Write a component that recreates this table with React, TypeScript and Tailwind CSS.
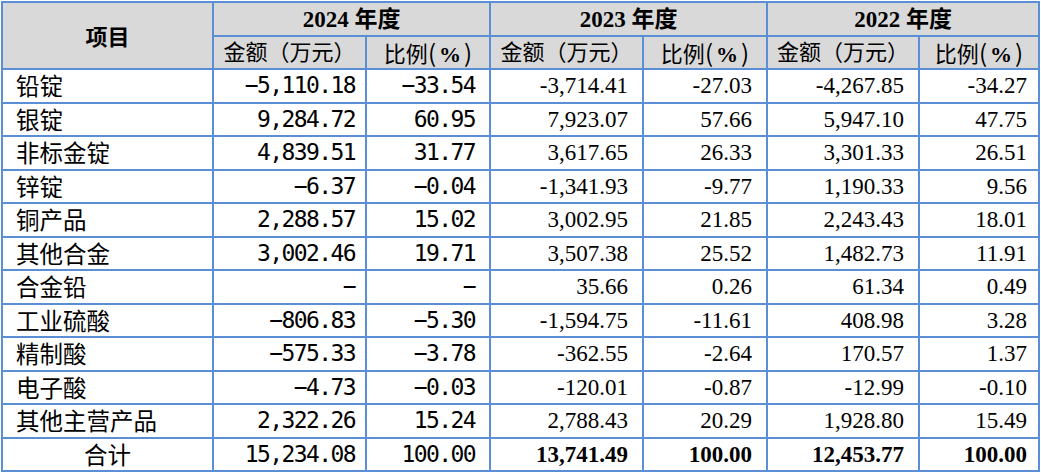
const rows: [string, string, string, string, string, string, string][] = [
  ['铅锭', '−5,110.18', '−33.54', '-3,714.41', '-27.03', '-4,267.85', '-34.27'],
  ['银锭', '9,284.72', '60.95', '7,923.07', '57.66', '5,947.10', '47.75'],
  ['非标金锭', '4,839.51', '31.77', '3,617.65', '26.33', '3,301.33', '26.51'],
  ['锌锭', '−6.37', '−0.04', '-1,341.93', '-9.77', '1,190.33', '9.56'],
  ['铜产品', '2,288.57', '15.02', '3,002.95', '21.85', '2,243.43', '18.01'],
  ['其他合金', '3,002.46', '19.71', '3,507.38', '25.52', '1,482.73', '11.91'],
  ['合金铅', '−', '−', '35.66', '0.26', '61.34', '0.49'],
  ['工业硫酸', '−806.83', '−5.30', '-1,594.75', '-11.61', '408.98', '3.28'],
  ['精制酸', '−575.33', '−3.78', '-362.55', '-2.64', '170.57', '1.37'],
  ['电子酸', '−4.73', '−0.03', '-120.01', '-0.87', '-12.99', '-0.10'],
  ['其他主营产品', '2,322.26', '15.24', '2,788.43', '20.29', '1,928.80', '15.49'],
];

const cjk = "font-['Noto_Sans_CJK_SC',sans-serif]";
const serif = "font-['Liberation_Serif','Noto_Sans_CJK_SC',serif]";
const mono = "font-['DejaVu_Sans_Mono',monospace] text-[23px] tracking-[-1.6px]";
const cell = 'border-2 border-[#5a8fd5] px-0';

export default function App() {
  return (
    <div className="w-[1041px] h-[473px] bg-white pt-px pl-px">
      <table className="table-fixed border-collapse w-[1039px] text-black">
        <colgroup>
          <col className="w-[211px]" />
          <col className="w-[153px]" />
          <col className="w-[124px]" />
          <col className="w-[153px]" />
          <col className="w-[124px]" />
          <col className="w-[152px]" />
          <col className="w-[120px]" />
        </colgroup>
        <thead className="bg-[#d9d9d9]">
          <tr className="h-[34px]">
            <th rowSpan={2} className={`${cell} ${cjk} text-[22px] font-bold text-center`}>
              项目
            </th>
            {['2024', '2023', '2022'].map((y) => (
              <th key={y} colSpan={2} className={`${cell} ${serif} text-[23px] font-bold text-center leading-none`}>
                {y} 年度
              </th>
            ))}
          </tr>
          <tr className="h-[33px]">
            {[0, 1, 2].map((i) => (
              <>
                <th key={`a${i}`} className={`${cell} ${serif} text-[22px] font-normal text-center leading-none`}>
                  金额（万元）
                </th>
                <th key={`b${i}`} className={`${cell} ${serif} text-[22px] font-normal text-center leading-none`}>
                  比例<span className={`${cjk} text-[24px]`}>(</span>
                  <span className="font-bold mx-[3px]">%</span>
                  <span className={`${cjk} text-[24px]`}>)</span>
                </th>
              </>
            ))}
          </tr>
        </thead>
        <tbody>
          {rows.map((r) => (
            <tr key={r[0]} className="h-[33.5px]">
              <td className={`${cell} ${cjk} text-[23.5px] leading-none pl-[13px] text-left`}>{r[0]}</td>
              <td className={`${cell} ${mono} text-right pr-[10px] leading-none`}>{r[1]}</td>
              <td className={`${cell} ${mono} text-right pr-[14px] leading-none`}>{r[2]}</td>
              <td className={`${cell} ${serif} text-[23px] text-right pr-[14px] leading-none`}>{r[3]}</td>
              <td className={`${cell} ${serif} text-[23px] text-right pr-[14px] leading-none`}>{r[4]}</td>
              <td className={`${cell} ${serif} text-[23px] text-right pr-[14px] leading-none`}>{r[5]}</td>
              <td className={`${cell} ${serif} text-[23px] text-right pr-[11px] leading-none`}>{r[6]}</td>
            </tr>
          ))}
          <tr className="h-[33.5px]">
            <td className={`${cell} ${cjk} text-[23.5px] leading-none text-center`}>合计</td>
            <td className={`${cell} ${mono} text-right pr-[10px] leading-none`}>15,234.08</td>
            <td className={`${cell} ${mono} text-right pr-[14px] leading-none`}>100.00</td>
            <td className={`${cell} ${serif} text-[23px] font-bold text-right pr-[14px] leading-none`}>13,741.49</td>
            <td className={`${cell} ${serif} text-[23px] font-bold text-right pr-[14px] leading-none`}>100.00</td>
            <td className={`${cell} ${serif} text-[23px] font-bold text-right pr-[14px] leading-none`}>12,453.77</td>
            <td className={`${cell} ${serif} text-[23px] font-bold text-right pr-[11px] leading-none`}>100.00</td>
          </tr>
        </tbody>
      </table>
    </div>
  );
}
